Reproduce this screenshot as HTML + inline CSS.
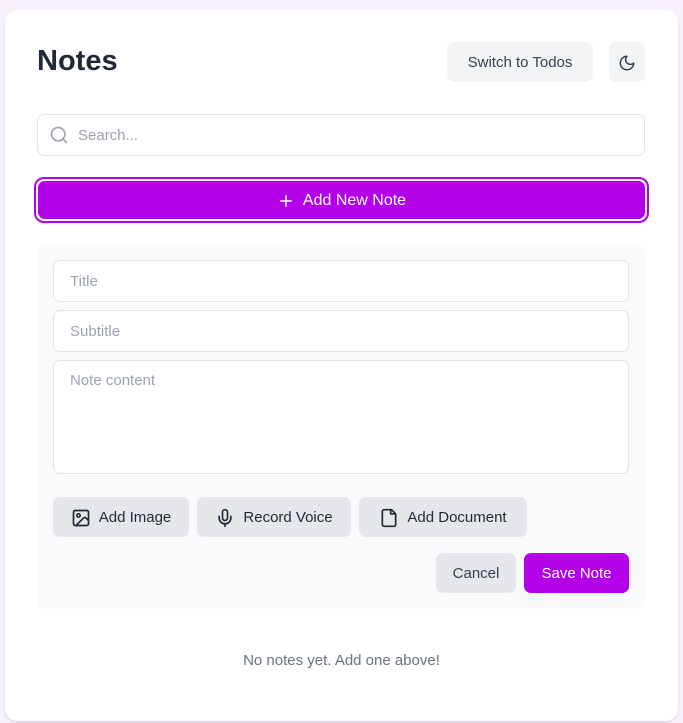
<!DOCTYPE html>
<html><head><meta charset="utf-8"><style>
*{box-sizing:border-box;margin:0;padding:0}
body{width:683px;height:723px;background:#f6f1fd;font-family:"Liberation Sans",sans-serif;position:relative;overflow:hidden}
.card{position:absolute;left:5px;top:10px;width:673px;height:711px;background:#fff;border-radius:12px;box-shadow:0 1px 2px rgba(0,0,0,.15)}
.a{position:absolute}
.btn{position:absolute;background:#e5e7eb;border-radius:7px;display:flex;align-items:center;justify-content:center;font-size:15px;color:#1f2937;padding-top:1px}
.inp{position:absolute;background:#fff;border:1px solid #e2e4e9;border-radius:7px;font-size:15px;color:#9ca3af;padding-left:16px}
svg{fill:none;stroke:currentColor;stroke-width:2;stroke-linecap:round;stroke-linejoin:round}
</style></head><body>
<div class="card"></div>
<div class="a" style="left:37px;top:45px;font-size:29px;font-weight:bold;color:#1f2937">Notes</div>
<div class="btn" style="left:447px;top:42px;width:146px;height:40px;background:#f3f4f6;color:#374151">Switch to Todos</div>
<div class="btn" style="left:609px;top:42px;width:36px;height:40px;background:#f3f4f6;color:#374151"><svg width="18" height="18" viewBox="0 0 24 24"><path d="M12 3a6 6 0 0 0 9 9 9 9 0 1 1-9-9z"/></svg></div>
<div class="inp" style="left:37px;top:114px;width:608px;height:42px;padding-left:40px;line-height:41px">Search...</div>
<svg class="a" style="left:49px;top:125px;color:#9ca3af" width="20" height="20" viewBox="0 0 24 24"><circle cx="11" cy="11" r="8"/><path d="m21 21-4.3-4.3"/></svg>
<div class="a" style="left:34px;top:177px;width:615px;height:46px;border:2px solid #b300e8;border-radius:10px"></div>
<div class="btn" style="left:38px;top:181px;width:607px;height:38px;background:#b300e8;color:#fff;font-size:16px"><svg width="18" height="18" viewBox="0 0 24 24" style="margin-right:8px"><path d="M5 12h14M12 5v14"/></svg>Add New Note</div>
<div class="a" style="left:37px;top:244px;width:608px;height:365px;background:#f9fafb;border-radius:8px"></div>
<div class="inp" style="left:53px;top:260px;width:576px;height:42px;line-height:41px">Title</div>
<div class="inp" style="left:53px;top:310px;width:576px;height:42px;line-height:41px">Subtitle</div>
<div class="inp" style="left:53px;top:360px;width:576px;height:114px;padding-top:11px">Note content</div>
<div class="btn" style="left:53px;top:497px;width:136px;height:40px"><svg width="20" height="20" viewBox="0 0 24 24" style="margin-right:8px"><rect x="3" y="3" width="18" height="18" rx="2"/><circle cx="9" cy="9" r="2"/><path d="m21 15-3.1-3.1a2 2 0 0 0-2.8 0L6 21"/></svg>Add Image</div>
<div class="btn" style="left:197px;top:497px;width:154px;height:40px"><svg width="20" height="20" viewBox="0 0 24 24" style="margin-right:8px"><rect x="9" y="2" width="6" height="13" rx="3"/><path d="M19 10v2a7 7 0 0 1-14 0v-2M12 19v3"/></svg>Record Voice</div>
<div class="btn" style="left:359px;top:497px;width:168px;height:40px"><svg width="20" height="20" viewBox="0 0 24 24" style="margin-right:8px"><path d="M15 2H6a2 2 0 0 0-2 2v16a2 2 0 0 0 2 2h12a2 2 0 0 0 2-2V7z"/><path d="M14 2v5h6"/></svg>Add Document</div>
<div class="btn" style="left:436px;top:553px;width:80px;height:40px;color:#374151">Cancel</div>
<div class="btn" style="left:524px;top:553px;width:105px;height:40px;background:#b300e8;color:#fff">Save Note</div>
<div class="a" style="left:0;width:683px;top:652px;text-align:center;font-size:15px;color:#6b7280">No notes yet. Add one above!</div>
</body></html>
